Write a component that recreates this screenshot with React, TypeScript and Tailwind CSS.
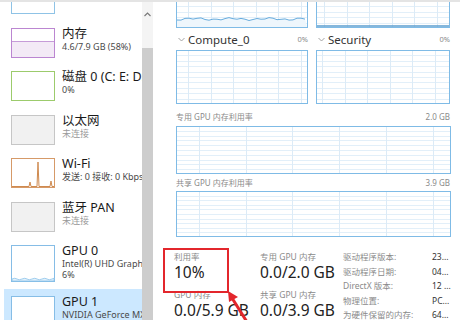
import React from "react";

const FONT = { fontFamily: '"Noto Sans", "Noto Sans CJK SC", sans-serif' };

type ThumbKind = "cpu" | "mem" | "disk" | "off" | "wifi" | "gpu";

function Thumb({ kind, h }: { kind: ThumbKind; h: number }) {
    const w = 44;
    const colors: Record<ThumbKind, string> = {
        cpu: "#8fc3e6",
        mem: "#bb86d1",
        disk: "#9ccb6c",
        off: "#c6c6c6",
        wifi: "#d69a68",
        gpu: "#86bde6",
    };
    const c = colors[kind];
    return (
        <svg width={w} height={h} className="block shrink-0">
            <rect x={0.5} y={0.5} width={w - 1} height={h - 1} fill={kind === "off" ? "#f1f1f1" : "#fff"} stroke={c} />
            {kind === "mem" && (
                <>
                    <rect x={1} y={13} width={w - 2} height={h - 14} fill="#f3eaf6" />
                    <line x1={1} y1={13.5} x2={w - 1} y2={13.5} stroke="#c69cd8" />
                </>
            )}
            {kind === "wifi" && (
                <polyline
                    points={`1,${h - 1.5} 18,${h - 1.5} 19,${h - 6} 20,${h - 1.5} 26,${h - 1.5} 27,${h - 26} 28,${h - 1.5} 39,${h - 1.5} 40,${h - 7} 41,${h - 1.5} 43,${h - 1.5}`}
                    fill="none"
                    stroke="#cf8a4f"
                    strokeWidth={1}
                />
            )}
            {kind === "gpu" && (
                <path
                    d={`M1 ${h - 3} q3 -1.5 5 0 t5 0 t5 0 t5 0 t5 0 t5 0 t5 0 t5 0 t2 0 V${h - 1} H1 Z`}
                    fill="#e3f1fb"
                    stroke="#8cc3ea"
                    strokeWidth={0.8}
                />
            )}
        </svg>
    );
}

type Item = {
    title: string;
    sub: string[];
    kind: ThumbKind;
    muted?: boolean;
    tall?: boolean;
    selected?: boolean;
};

const ITEMS: Item[] = [
    { title: "", sub: [], kind: "cpu" },
    { title: "内存", sub: ["4.6/7.9 GB (58%)"], kind: "mem" },
    { title: "磁盘 0 (C: E: D:)", sub: ["0%"], kind: "disk" },
    { title: "以太网", sub: ["未连接"], kind: "off", muted: true },
    { title: "Wi-Fi", sub: ["发送: 0 接收: 0 Kbps"], kind: "wifi" },
    { title: "蓝牙 PAN", sub: ["未连接"], kind: "off", muted: true },
    { title: "GPU 0", sub: ["Intel(R) UHD Graphics 630", "6%"], kind: "gpu", tall: true },
    { title: "GPU 1", sub: ["NVIDIA GeForce MX250", "0%"], kind: "gpu", tall: true, selected: true },
];

function Graph({ w, h, vx, vs, kind }: { w: number; h: number; vx: number; vs: number; kind?: "wave" | "floor" }) {
    const rows: number[] = [];
    for (let i = 1; i < 10; i++) rows.push(Math.round((h * i) / 10) + 0.5);
    const cols: number[] = [];
    for (let x = vx; x < w - 1; x += vs) cols.push(Math.round(x) + 0.5);
    let wave = "";
    if (kind === "wave") {
        const pts: string[] = [];
        for (let x = 1; x <= w - 1; x += 4) {
            const y = h - 9 + Math.sin(x * 0.45) * 0.8 + Math.cos(x * 0.17) * 0.7;
            pts.push(`${x},${y.toFixed(1)}`);
        }
        wave = pts.join(" ");
    }
    return (
        <svg width={w} height={h} className="block shrink-0">
            <rect x={0.5} y={0.5} width={w - 1} height={h - 1} fill="#fff" />
            {rows.map((y) => (
                <line key={"r" + y} x1={1} y1={y} x2={w - 1} y2={y} stroke="#e2eff9" />
            ))}
            {cols.map((x) => (
                <line key={"c" + x} x1={x} y1={1} x2={x} y2={h - 1} stroke="#dcebf7" />
            ))}
            {kind === "wave" && (
                <>
                    <polygon points={`1,${h - 1} ${wave} ${w - 1},${h - 1}`} fill="#eef6fc" />
                    <polyline points={wave} fill="none" stroke="#68acdd" strokeWidth={1} />
                </>
            )}
            {kind === "floor" && <line x1={1} y1={h - 2} x2={w - 1} y2={h - 2} stroke="#5e9fcf" strokeWidth={1.5} />}
            <rect x={0.5} y={0.5} width={w - 1} height={h - 1} fill="none" stroke="#7fbbe6" />
        </svg>
    );
}

function Chevron() {
    return (
        <svg width="7" height="5" viewBox="0 0 7 5" className="shrink-0">
            <polyline points="0.5,1 3.5,4 6.5,1" fill="none" stroke="#9a9a9a" strokeWidth="0.9" />
        </svg>
    );
}

export default function App() {
    return (
        <div className="relative w-[460px] h-[320px] overflow-hidden bg-white text-[#1f1f1f]" style={FONT}>
            <div className="h-[2px] bg-[#e4e4e4]" />
            <div className="flex h-[318px]">
                {/* Sidebar */}
                <div className="w-[142px] shrink-0 overflow-hidden">
                    <div className="mt-[-25px] pl-[4px]">
                        {ITEMS.map((it, i) => (
                            <div
                                key={i}
                                className={
                                    "flex gap-[7px] pl-[7px] pt-[7px] " +
                                    (it.tall ? "h-[51px] " : "h-[43.5px] ") +
                                    (it.selected ? "bg-[#cce8ff]" : "")
                                }
                            >
                                <Thumb kind={it.kind} h={it.tall ? 37 : 30} />
                                <div className="min-w-0 whitespace-nowrap -mt-[1px]">
                                    <div className="text-[12.5px] leading-[14px] text-[#1a1a1a]">{it.title}</div>
                                    {it.sub.map((s, j) => (
                                        <div
                                            key={j}
                                            className={
                                                "text-[9px] leading-[11px] " +
                                                (it.muted ? "text-[#9a9a9a]" : "text-[#4a4a4a]")
                                            }
                                        >
                                            {s}
                                        </div>
                                    ))}
                                </div>
                            </div>
                        ))}
                    </div>
                </div>

                {/* Scrollbar */}
                <div className="w-[11px] shrink-0 flex flex-col">
                    <div className="h-[46px] bg-[#f4f4f4] flex justify-center pt-[10px]">
                        <svg width="7" height="5" viewBox="0 0 7 5">
                            <polyline points="0.5,4 3.5,1 6.5,4" fill="none" stroke="#777" strokeWidth="1.1" />
                        </svg>
                    </div>
                    <div className="flex-1 bg-[#cdcdcd]" />
                </div>

                {/* Main panel */}
                <div className="flex-1 pl-[23px] pr-[10px] overflow-hidden">
                    <div className="mt-[-28px] grid grid-cols-[132px_134px] gap-x-[8px]">
                        <Graph w={132} h={54} vx={12} vs={22.5} kind="wave" />
                        <Graph w={134} h={54} vx={8} vs={22.5} kind="floor" />
                        {["Compute_0", "Security"].map((t) => (
                            <div key={t} className="h-[22px] flex items-center pt-[1px] pl-[2px]">
                                <Chevron />
                                <span className="ml-[3px] text-[11.5px] text-[#333]">{t}</span>
                                <span className="ml-auto text-[7.5px] text-[#8a8a8a]">0%</span>
                            </div>
                        ))}
                        <Graph w={132} h={54} vx={12} vs={22.5} />
                        <Graph w={134} h={54} vx={6} vs={22.5} />
                    </div>

                    <div className="h-[22px] flex items-center pt-[3px] text-[8px] text-[#8a8a8a]">
                        <span>专用 GPU 内存利用率</span>
                        <span className="ml-auto">2.0 GB</span>
                    </div>
                    <Graph w={275} h={48} vx={23} vs={46.7} />

                    <div className="h-[17px] flex items-center text-[8px] text-[#8a8a8a]">
                        <span>共享 GPU 内存利用率</span>
                        <span className="ml-auto">3.9 GB</span>
                    </div>
                    <Graph w={275} h={46} vx={23} vs={46.7} />

                    {/* Stats */}
                    <div className="flex -ml-[2px] pt-[14px] whitespace-nowrap">
                        <div className="w-[86px] shrink-0">
                            <div className="text-[8.5px] leading-[12px] text-[#8a8a8a]">利用率</div>
                            <div className="text-[15.5px] leading-[18px] text-[#222]">10%</div>
                            <div className="mt-[8px] text-[8.5px] leading-[12px] text-[#8a8a8a]">GPU 内存</div>
                            <div className="text-[15.5px] leading-[18px] text-[#222]">0.0/5.9 GB</div>
                        </div>
                        <div className="w-[83px] shrink-0">
                            <div className="text-[8.5px] leading-[12px] text-[#8a8a8a]">专用 GPU 内存</div>
                            <div className="text-[15.5px] leading-[18px] text-[#222]">0.0/2.0 GB</div>
                            <div className="mt-[8px] text-[8.5px] leading-[12px] text-[#8a8a8a]">共享 GPU 内存</div>
                            <div className="text-[15.5px] leading-[18px] text-[#222]">0.0/3.9 GB</div>
                        </div>
                        <div className="grid grid-cols-[89px_auto] text-[8.5px] leading-[14.5px] -mt-[1px]">
                            <span className="text-[#8a8a8a]">驱动程序版本:</span>
                            <span className="text-[#333]">23...</span>
                            <span className="text-[#8a8a8a]">驱动程序日期:</span>
                            <span className="text-[#333]">04...</span>
                            <span className="text-[#8a8a8a]">DirectX 版本:</span>
                            <span className="text-[#333]">12 ...</span>
                            <span className="text-[#8a8a8a]">物理位置:</span>
                            <span className="text-[#333]">PC...</span>
                            <span className="text-[#8a8a8a]">为硬件保留的内存:</span>
                            <span className="text-[#333]">64...</span>
                        </div>
                    </div>
                </div>
            </div>

            {/* Annotation: red box and arrow */}
            <div className="absolute left-[163px] top-[248px] w-[66px] h-[45px] border-2 border-[#e3262c]" />
            <svg className="absolute left-[220px] top-[286px]" width="40" height="34" viewBox="0 0 40 34">
                <line x1="27" y1="36" x2="12" y2="12" stroke="#e3262c" strokeWidth="3" />
                <polygon points="8,5 18,11 9,16" fill="#e3262c" />
            </svg>
        </div>
    );
}
